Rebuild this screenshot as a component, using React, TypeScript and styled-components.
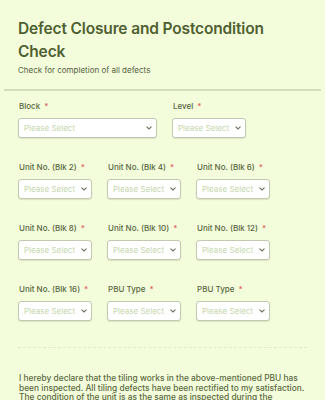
import styled, { createGlobalStyle } from "styled-components";

const GlobalStyle = createGlobalStyle`
  html, body {
    margin: 0;
    padding: 0;
    background: #f3fddc;
  }
  body {
    font-family: Inter, "Noto Sans", sans-serif;
  }
`;

const Page = styled.div`
  width: 325px;
  height: 400px;
  overflow: hidden;
  background: #f3fddc;
`;

const Header = styled.div`
  margin: 0 4px;
  padding: 18px 10px 13px 14px;
  border-bottom: 2px solid #d5ddc0;
`;

const Title = styled.h1`
  margin: 0;
  max-width: 275px;
  font-size: 15.5px;
  line-height: 22.5px;
  letter-spacing: -0.15px;
  font-weight: 600;
  color: #4f5f31;
`;

const Subtitle = styled.p`
  margin: 1px 0 0 0;
  font-size: 8px;
  line-height: 12px;
  color: #56613f;
`;

const Form = styled.div`
  padding: 10px 18px 0 18px;
  display: flex;
  flex-direction: column;
  gap: 24px;
`;

const Row = styled.div`
  display: flex;
  gap: 15px;
`;

const Field = styled.div<{ $width: number }>`
  width: ${(p) => p.$width}px;
  display: flex;
  flex-direction: column;
  gap: 7px;
`;

const Label = styled.label`
  font-size: 8px;
  line-height: 10px;
  font-weight: 500;
  color: #59673f;
  padding-left: 1px;
  white-space: nowrap;

  span {
    color: #e15b5b;
    margin-left: 4px;
  }
`;

const Select = styled.div`
  box-sizing: border-box;
  height: 20px;
  border: 1px solid #c3c9b0;
  border-radius: 3px;
  background: #ffffff;
  box-shadow: 0 1px 1px rgba(120, 130, 90, 0.2);
  display: flex;
  align-items: center;
  justify-content: space-between;
  padding: 0 4px 0 5px;
  font-size: 8px;
  color: #c5d6ac;
  white-space: nowrap;

  svg {
    flex-shrink: 0;
  }
`;

const Divider = styled.div`
  margin: 26px 18px 0 18px;
  border-top: 1px dashed #e3e9cf;
`;

const Declaration = styled.p`
  margin: 26px 18px 0 19px;
  font-size: 8.4px;
  line-height: 9.6px;
  color: #5b6942;
  font-weight: 500;
`;

function Chevron() {
  return (
    <svg width="6" height="4" viewBox="0 0 6 4" fill="none">
      <path d="M0.8 0.8 L3 3 L5.2 0.8" stroke="#6f765f" strokeWidth="1.1" strokeLinecap="round" strokeLinejoin="round" />
    </svg>
  );
}

function SelectField({ label, width }: { label: string; width: number }) {
  return (
    <Field $width={width}>
      <Label>
        {label}
        <span>*</span>
      </Label>
      <Select>
        Please Select
        <Chevron />
      </Select>
    </Field>
  );
}

export default function App() {
  return (
    <Page>
      <GlobalStyle />
      <Header>
        <Title>Defect Closure and Postcondition Check</Title>
        <Subtitle>Check for completion of all defects</Subtitle>
      </Header>
      <Form>
        <Row>
          <SelectField label="Block" width={139} />
          <SelectField label="Level" width={74} />
        </Row>
        <Row>
          <SelectField label="Unit No. (Blk 2)" width={74} />
          <SelectField label="Unit No. (Blk 4)" width={74} />
          <SelectField label="Unit No. (Blk 6)" width={74} />
        </Row>
        <Row>
          <SelectField label="Unit No. (Blk 8)" width={74} />
          <SelectField label="Unit No. (Blk 10)" width={74} />
          <SelectField label="Unit No. (Blk 12)" width={74} />
        </Row>
        <Row>
          <SelectField label="Unit No. (Blk 16)" width={74} />
          <SelectField label="PBU Type" width={74} />
          <SelectField label="PBU Type" width={74} />
        </Row>
      </Form>
      <Divider />
      <Declaration>
        I hereby declare that the tiling works in the above-mentioned PBU has been inspected. All tiling defects have been rectified to my satisfaction. The condition of the unit is as the same as inspected during the
      </Declaration>
    </Page>
  );
}
